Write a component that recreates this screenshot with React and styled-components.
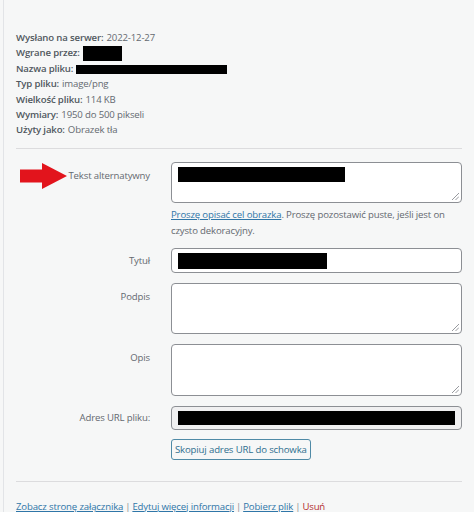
import React from 'react';
import styled, { createGlobalStyle } from 'styled-components';

const GlobalStyle = createGlobalStyle`
  html, body {
    margin: 0;
    padding: 0;
    background: #f6f7f7;
  }
  body {
    font-family: "Open Sans", Lato, "Liberation Sans", sans-serif;
    font-size: 9.6px;
    letter-spacing: -0.15px;
    color: #646970;
  }
`;

const Panel = styled.div`
  margin-left: 3px;
  border-left: 1px solid #e2e4e7;
  padding: 30px 12px 0 12px;
  min-height: 512px;
  box-sizing: border-box;
`;

const Details = styled.div`
  line-height: 15.4px;
  color: #646970;
`;

const MetaLine = styled.div`
  display: flex;
  align-items: center;
  white-space: nowrap;

  strong {
    font-weight: 600;
    color: #50575e;
    margin-right: 3px;
  }
`;

const Redacted = styled.span`
  display: inline-block;
  background: #000;
  width: ${(p) => p.w}px;
  height: ${(p) => p.h}px;
  margin-top: ${(p) => p.top || 0}px;
`;

const Divider = styled.hr`
  border: 0;
  border-top: 1px solid #dcdcde;
  margin: ${(p) => p.m || '10px 0 13px'};
`;

const Row = styled.div`
  display: grid;
  grid-template-columns: 134px 1fr;
  column-gap: 21px;
  align-items: ${(p) => (p.center ? 'center' : 'start')};
  margin-bottom: ${(p) => p.gap ?? 10}px;
`;

const Label = styled.label`
  text-align: right;
  color: #646970;
  line-height: 15px;
  padding-top: ${(p) => (p.center ? 0 : 6)}px;
  position: relative;
  white-space: nowrap;
`;

const Arrow = styled.svg`
  position: absolute;
  left: 4px;
  top: 1px;
`;

const Field = styled.div`
  position: relative;
  box-sizing: border-box;
  height: ${(p) => p.h}px;
  border: 1px solid #8c8f94;
  border-radius: 4px;
  background: ${(p) => (p.readOnly ? '#f0f0f1' : '#fff')};
  padding: 4px 6px;
`;

const Grip = styled.svg`
  position: absolute;
  right: 2px;
  bottom: 2px;
`;

const Help = styled.p`
  margin: 4px 0 0;
  line-height: 16px;
  color: #646970;
`;

const Link = styled.a`
  color: ${(p) => (p.danger ? '#b32d2e' : '#2f76a8')};
  text-decoration: ${(p) => (p.danger ? 'none' : 'underline')};
  text-underline-offset: 1px;
`;

const CopyButton = styled.button`
  justify-self: start;
  height: 21px;
  padding: 0 3px;
  white-space: nowrap;
  font-family: inherit;
  font-size: 9.6px;
  letter-spacing: -0.15px;
  color: #2f6f8f;
  background: #f6f7f7;
  border: 1px solid #4f8aa6;
  border-radius: 3px;
`;

const Footer = styled.div`
  line-height: 16px;
  color: #646970;
  white-space: nowrap;
`;

const Sep = styled.span`
  margin: 0 2px;
  color: #8c8f94;
`;

const ResizeGrip = () => (
  <Grip width="8" height="8" viewBox="0 0 8 8">
    <path d="M1 8 L8 1 M4.5 8 L8 4.5" stroke="#8c8f94" strokeWidth="0.9" fill="none" />
  </Grip>
);

const meta = [
  ['Wysłano na serwer:', '2022-12-27'],
  ['Wgrane przez:', <Redacted key="u" w={39} h={15} />],
  ['Nazwa pliku:', <Redacted key="n" w={151} h={9} top={2} />],
  ['Typ pliku:', 'image/png'],
  ['Wielkość pliku:', '114 KB'],
  ['Wymiary:', '1950 do 500 pikseli'],
  ['Użyty jako:', 'Obrazek tła'],
];

export default function App() {
  return (
    <>
      <GlobalStyle />
      <Panel>
        <Details>
          {meta.map(([k, v]) => (
            <MetaLine key={k}>
              <strong>{k}</strong>
              {v}
            </MetaLine>
          ))}
        </Details>

        <Divider />

        <Row gap={9}>
          <Label>
            <Arrow width="47" height="26" viewBox="0 0 47 26">
              <path d="M0 6.5 H22 V0 L47 13 L22 26 V19.5 H0 Z" fill="#e2141c" />
            </Arrow>
            Tekst alternatywny
          </Label>
          <div>
            <Field h={41}>
              <Redacted w={167} h={15} />
              <ResizeGrip />
            </Field>
            <Help>
              <Link href="#">Proszę opisać cel obrazka</Link>. Proszę pozostawić puste, jeśli jest on
              czysto dekoracyjny.
            </Help>
          </div>
        </Row>

        <Row center>
          <Label center>Tytuł</Label>
          <Field h={25}>
            <Redacted w={149} h={16} />
          </Field>
        </Row>

        <Row>
          <Label>Podpis</Label>
          <Field h={51}>
            <ResizeGrip />
          </Field>
        </Row>

        <Row>
          <Label>Opis</Label>
          <Field h={52}>
            <ResizeGrip />
          </Field>
        </Row>

        <Row center gap={9}>
          <Label center>Adres URL pliku:</Label>
          <Field h={24} readOnly>
            <Redacted w={277} h={14} />
          </Field>
        </Row>

        <Row gap={0}>
          <span />
          <CopyButton>Skopiuj adres URL do schowka</CopyButton>
        </Row>

        <Divider m="21px 0 17px" />

        <Footer>
          <Link href="#">Zobacz stronę załącznika</Link>
          <Sep>|</Sep>
          <Link href="#">Edytuj więcej informacji</Link>
          <Sep>|</Sep>
          <Link href="#">Pobierz plik</Link>
          <Sep>|</Sep>
          <Link href="#" danger>Usuń</Link>
        </Footer>
      </Panel>
    </>
  );
}
